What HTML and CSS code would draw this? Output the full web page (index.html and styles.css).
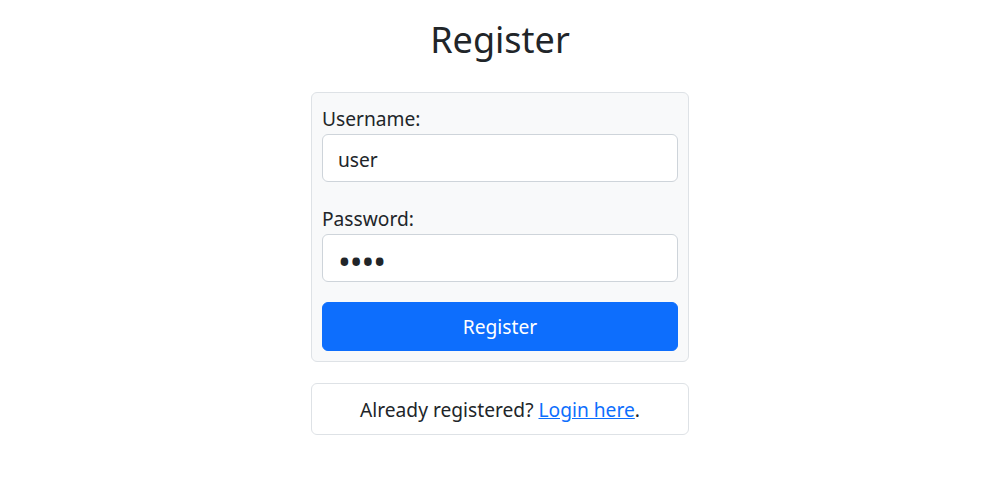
FILE: index.html
```html
<!DOCTYPE html>
<html lang="en">
<head>
<meta charset="utf-8">
<title>Register</title>
<link rel="stylesheet" href="styles.css">
</head>
<body>
<main class="page">
  <h1 class="title">Register</h1>
  <form class="card form-card">
    <div class="field field-first">
      <label class="label" for="username">Username:</label>
      <input class="input" id="username" type="text" value="user">
    </div>
    <div class="field">
      <label class="label" for="password">Password:</label>
      <input class="input input-password" id="password" type="password" value="1234">
    </div>
    <button class="btn" type="button">Register</button>
  </form>
  <div class="card note-card">
    Already registered? <a class="link" href="#">Login here</a>.
  </div>
</main>
</body>
</html>
```
FILE: styles.css
```css
* { box-sizing: border-box; }
html, body { margin: 0; padding: 0; background: #fff; }
body {
  font-family: "Noto Sans", "Open Sans", sans-serif;
  font-size: 19.2px;
  line-height: 1.5;
  color: #212529;
}
.page {
  width: 378px;
  margin: 0 auto;
  padding-top: 16px;
  display: flex;
  flex-direction: column;
}
.title {
  margin: 0 0 28px;
  font-size: 36px;
  font-weight: 400;
  line-height: 48px;
  text-align: center;
}
.card {
  border: 1px solid #dee2e6;
  border-radius: 6px;
  padding: 10px;
}
.form-card {
  background: #f8f9fa;
  display: flex;
  flex-direction: column;
}
.field {
  display: flex;
  flex-direction: column;
  margin-bottom: 20px;
}
.field-first { margin-bottom: 21px; }
.label {
  line-height: 28px;
  padding-top: 2px;
  margin-bottom: 1px;
}
.input {
  height: 48px;
  padding: 8px 15px 6px;
  font: inherit;
  color: #212529;
  background: #fff;
  border: 1px solid #ced4da;
  border-radius: 6px;
  outline: none;
}
.input-password {
  font-size: 34px;
  line-height: 1;
  letter-spacing: -1px;
  padding-top: 10px;
  padding-bottom: 4px;
}
.btn {
  height: 49px;
  font: inherit;
  color: #fff;
  background: #0d6efd;
  border: 1px solid #0d6efd;
  border-radius: 6px;
  padding: 8px 15px 6px;
}
.note-card {
  margin-top: 21px;
  padding: 12px 10px 9px;
  text-align: center;
  background: #fff;
}
.link {
  color: #0d6efd;
  text-decoration: underline;
}
```
